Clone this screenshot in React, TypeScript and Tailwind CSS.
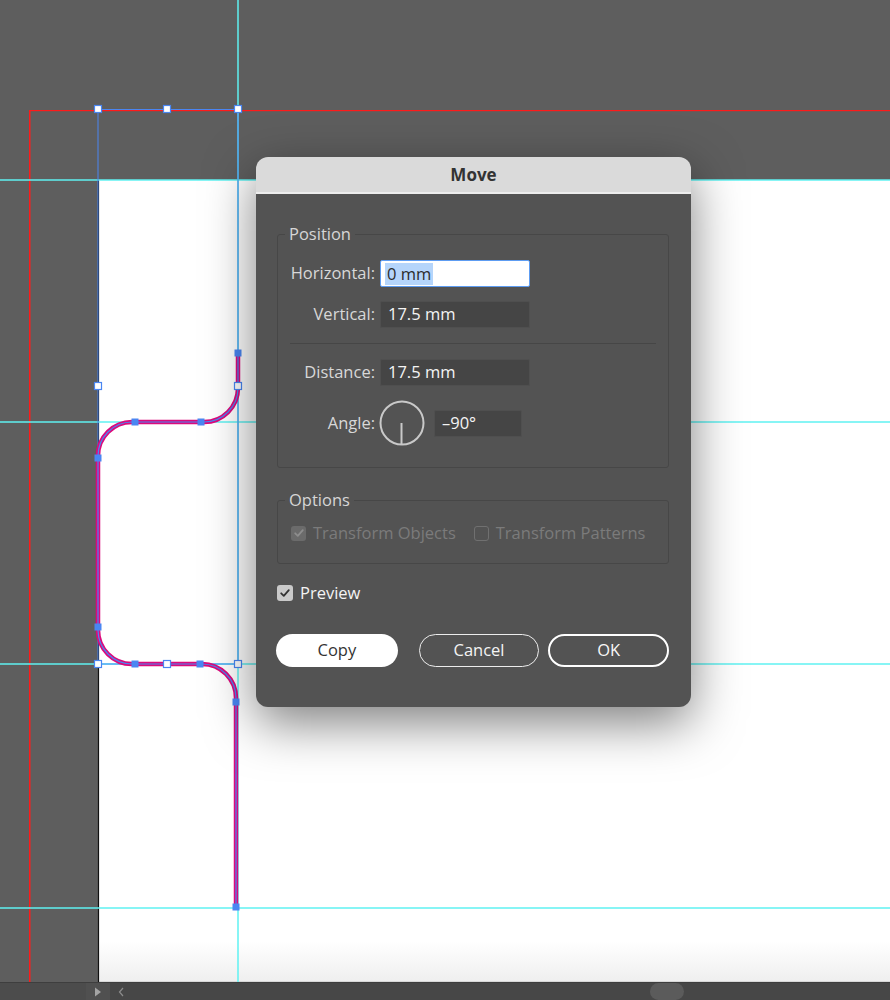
import React from "react";

function Check({ color }: { color: string }) {
  return (
    <svg width="12" height="12" viewBox="0 0 12 12" fill="none">
      <path d="M2.2 6.3 L4.8 8.8 L9.8 3.2" stroke={color} strokeWidth="1.8" strokeLinecap="round" strokeLinejoin="round" />
    </svg>
  );
}

function CanvasArt() {
  const cyan = "#5ff2f2";
  const blue = "#4a86f2";
  const handles: [number, number][] = [
    [98, 109],
    [167, 109],
    [238, 109],
    [98, 386],
    [238, 386],
    [98, 664],
    [167, 664],
    [238, 664],
  ];
  const anchors: [number, number][] = [
    [238, 353],
    [135, 422],
    [201, 422],
    [98, 458],
    [98, 627],
    [135, 664],
    [200, 664],
    [236, 702],
    [236, 907],
  ];
  const d =
    "M238 352 L238 388 A34 34 0 0 1 204 422 L132 422 A34 34 0 0 0 98 456 L98 630 A34 34 0 0 0 132 664 L202 664 A34 34 0 0 1 236 698 L236 908";
  return (
    <svg className="absolute left-0 top-0" width="890" height="982" viewBox="0 0 890 982">
      {/* bleed */}
      <rect x="29" y="110" width="1.5" height="872" fill="#ff1a1a" />
      <rect x="29" y="110" width="861" height="1.2" fill="#ff1a1a" />
      {/* artboard left edge */}
      <line x1="98.5" y1="180" x2="98.5" y2="982" stroke="#111" strokeWidth="1.2" />
      {/* guides */}
      {[180, 422, 664, 908].map((y) => (
        <line key={y} x1="0" y1={y} x2="890" y2={y} stroke={cyan} strokeWidth="1.5" />
      ))}
      <line x1="238" y1="0" x2="238" y2="982" stroke={cyan} strokeWidth="1.5" />
      {/* selection box */}
      <rect x="98" y="109.5" width="140" height="554.5" fill="none" stroke={blue} strokeWidth="1" />
      {/* path */}
      <path d={d} stroke="#dc0a7c" strokeWidth="4.5" fill="none" />
      <path d={d} stroke={blue} strokeWidth="1.2" fill="none" />
      {anchors.map(([x, y], i) => (
        <rect key={i} x={x - 3.5} y={y - 3.5} width="7" height="7" fill={blue} />
      ))}
      {handles.map(([x, y], i) => (
        <rect key={i} x={x - 3.5} y={y - 3.5} width="7" height="7" fill="#fff" stroke={blue} strokeWidth="1.2" />
      ))}
    </svg>
  );
}

function Field({ value, w = "w-[150px]" }: { value: string; w?: string }) {
  return (
    <div className={`${w} h-[27px] rounded-[2px] bg-[#454545] border border-[#4f4f4f] flex items-center pl-[7px] text-[16.5px] text-[#f4f4f4]`}>
      {value}
    </div>
  );
}

function Label({ children }: { children: React.ReactNode }) {
  return <div className="w-[97px] text-right text-[16.5px] text-[#d8d8d8]">{children}</div>;
}

function Dialog() {
  return (
    <div className="absolute left-[256px] top-[157px] w-[435px] h-[550px] rounded-[12px] overflow-hidden bg-[#535353] shadow-[0_16px_50px_rgba(0,0,0,0.5)] flex flex-col">
      <div className="h-[37px] shrink-0 bg-[#dadada] border-b-[2px] border-[#ededed] flex items-center justify-center text-[17px] font-bold text-[#333]">
        Move
      </div>
      <div className="flex flex-col pl-[21px] pr-[22px]">
        <fieldset className="mt-[29px] border border-[#474747] rounded-[3px] pt-[15px] pb-[21px]">
          <legend className="ml-[7px] px-[4px] text-[16.5px] leading-[22px] text-[#d6d6d6]">Position</legend>
          <div className="flex items-center gap-[5px]">
            <Label>Horizontal:</Label>
            <div className="w-[150px] h-[27px] rounded-[2px] bg-white border-[1.5px] border-[#5d9cf2] flex items-center pl-[4px] text-[16.5px] text-[#2c2c2c]">
              <span className="bg-[#b5d5fb] px-[2px] leading-[22px]">0 mm</span>
            </div>
          </div>
          <div className="flex items-center gap-[5px] mt-[14px]">
            <Label>Vertical:</Label>
            <Field value="17.5 mm" />
          </div>
          <div className="mx-[12px] mt-[15px] h-px bg-[#464646]" />
          <div className="flex items-center gap-[5px] mt-[15px]">
            <Label>Distance:</Label>
            <Field value="17.5 mm" />
          </div>
          <div className="flex items-center mt-[14px]">
            <Label>Angle:</Label>
            <svg className="ml-[4px]" width="46" height="46" viewBox="0 0 46 46">
              <circle cx="23" cy="23" r="21.5" fill="none" stroke="#c9c9c9" strokeWidth="2" />
              <line x1="22.5" y1="23" x2="22.5" y2="44" stroke="#c9c9c9" strokeWidth="2" />
            </svg>
            <div className="ml-[9px]">
              <Field value="–90°" w="w-[88px]" />
            </div>
          </div>
        </fieldset>

        <fieldset className="mt-[21px] border border-[#474747] rounded-[3px] pt-[11px] pb-[19px] pl-[13px]">
          <legend className="-ml-[6px] px-[4px] text-[16.5px] leading-[22px] text-[#d6d6d6]">Options</legend>
          <div className="flex items-center leading-[22px] text-[16.5px] text-[#7b7b7b]">
            <div className="w-[15px] h-[15px] rounded-[3px] bg-[#6b6b6b] flex items-center justify-center">
              <Check color="#8d8d8d" />
            </div>
            <span className="ml-[7px]">Transform Objects</span>
            <div className="ml-[18px] w-[15px] h-[15px] rounded-[3px] border border-[#707070]" />
            <span className="ml-[7px]">Transform Patterns</span>
          </div>
        </fieldset>

        <div className="mt-[18px] flex items-center leading-[22px]">
          <div className="w-[16px] h-[16px] rounded-[3px] bg-[#cacaca] flex items-center justify-center">
            <Check color="#333" />
          </div>
          <span className="ml-[7px] text-[16.5px] text-[#f4f4f4]">Preview</span>
        </div>

        <div className="mt-[30px] flex items-center">
          <div className="-ml-[1px] w-[122px] h-[33px] rounded-full bg-white flex items-center justify-center text-[16.5px] text-[#333]">
            Copy
          </div>
          <div className="ml-[21px] w-[121px] h-[33px] rounded-full border-[1.5px] border-[#ececec] flex items-center justify-center text-[16.5px] text-[#f4f4f4]">
            Cancel
          </div>
          <div className="ml-[9px] w-[121px] h-[33px] rounded-full border-[2.5px] border-white flex items-center justify-center text-[16.5px] text-[#f8f8f8]">
            OK
          </div>
        </div>
      </div>
    </div>
  );
}

export default function App() {
  return (
    <div className="w-[890px] h-[1000px] overflow-hidden bg-[#5e5e5e] flex flex-col font-['Open_Sans',sans-serif]">
      <div className="relative h-[982px] shrink-0">
        <div className="absolute left-[99px] top-[180px] right-0 bottom-0 bg-[linear-gradient(180deg,#ffffff_95%,#efefef_100%)] border-b border-[#d8d8d8]" />
        <CanvasArt />
        <Dialog />
      </div>
      <div className="h-[18px] flex bg-[#474747] border-t border-[#3e3e3e]">
        <div className="w-[86px] bg-[#4c4c4c]" />
        <div className="w-[24px] bg-[#505050] flex items-center justify-center">
          <svg width="8" height="10" viewBox="0 0 8 10">
            <path d="M1 0.5 L7 5 L1 9.5 Z" fill="#a4a4a4" />
          </svg>
        </div>
        <div className="w-[22px] flex items-center justify-center">
          <svg width="6" height="10" viewBox="0 0 6 10">
            <path d="M5 1 L1.5 5 L5 9" stroke="#8c8c8c" strokeWidth="1.2" fill="none" />
          </svg>
        </div>
        <div className="ml-[518px] w-[34px] h-[17px] rounded-full bg-[#5b5b5b]" />
      </div>
    </div>
  );
}
